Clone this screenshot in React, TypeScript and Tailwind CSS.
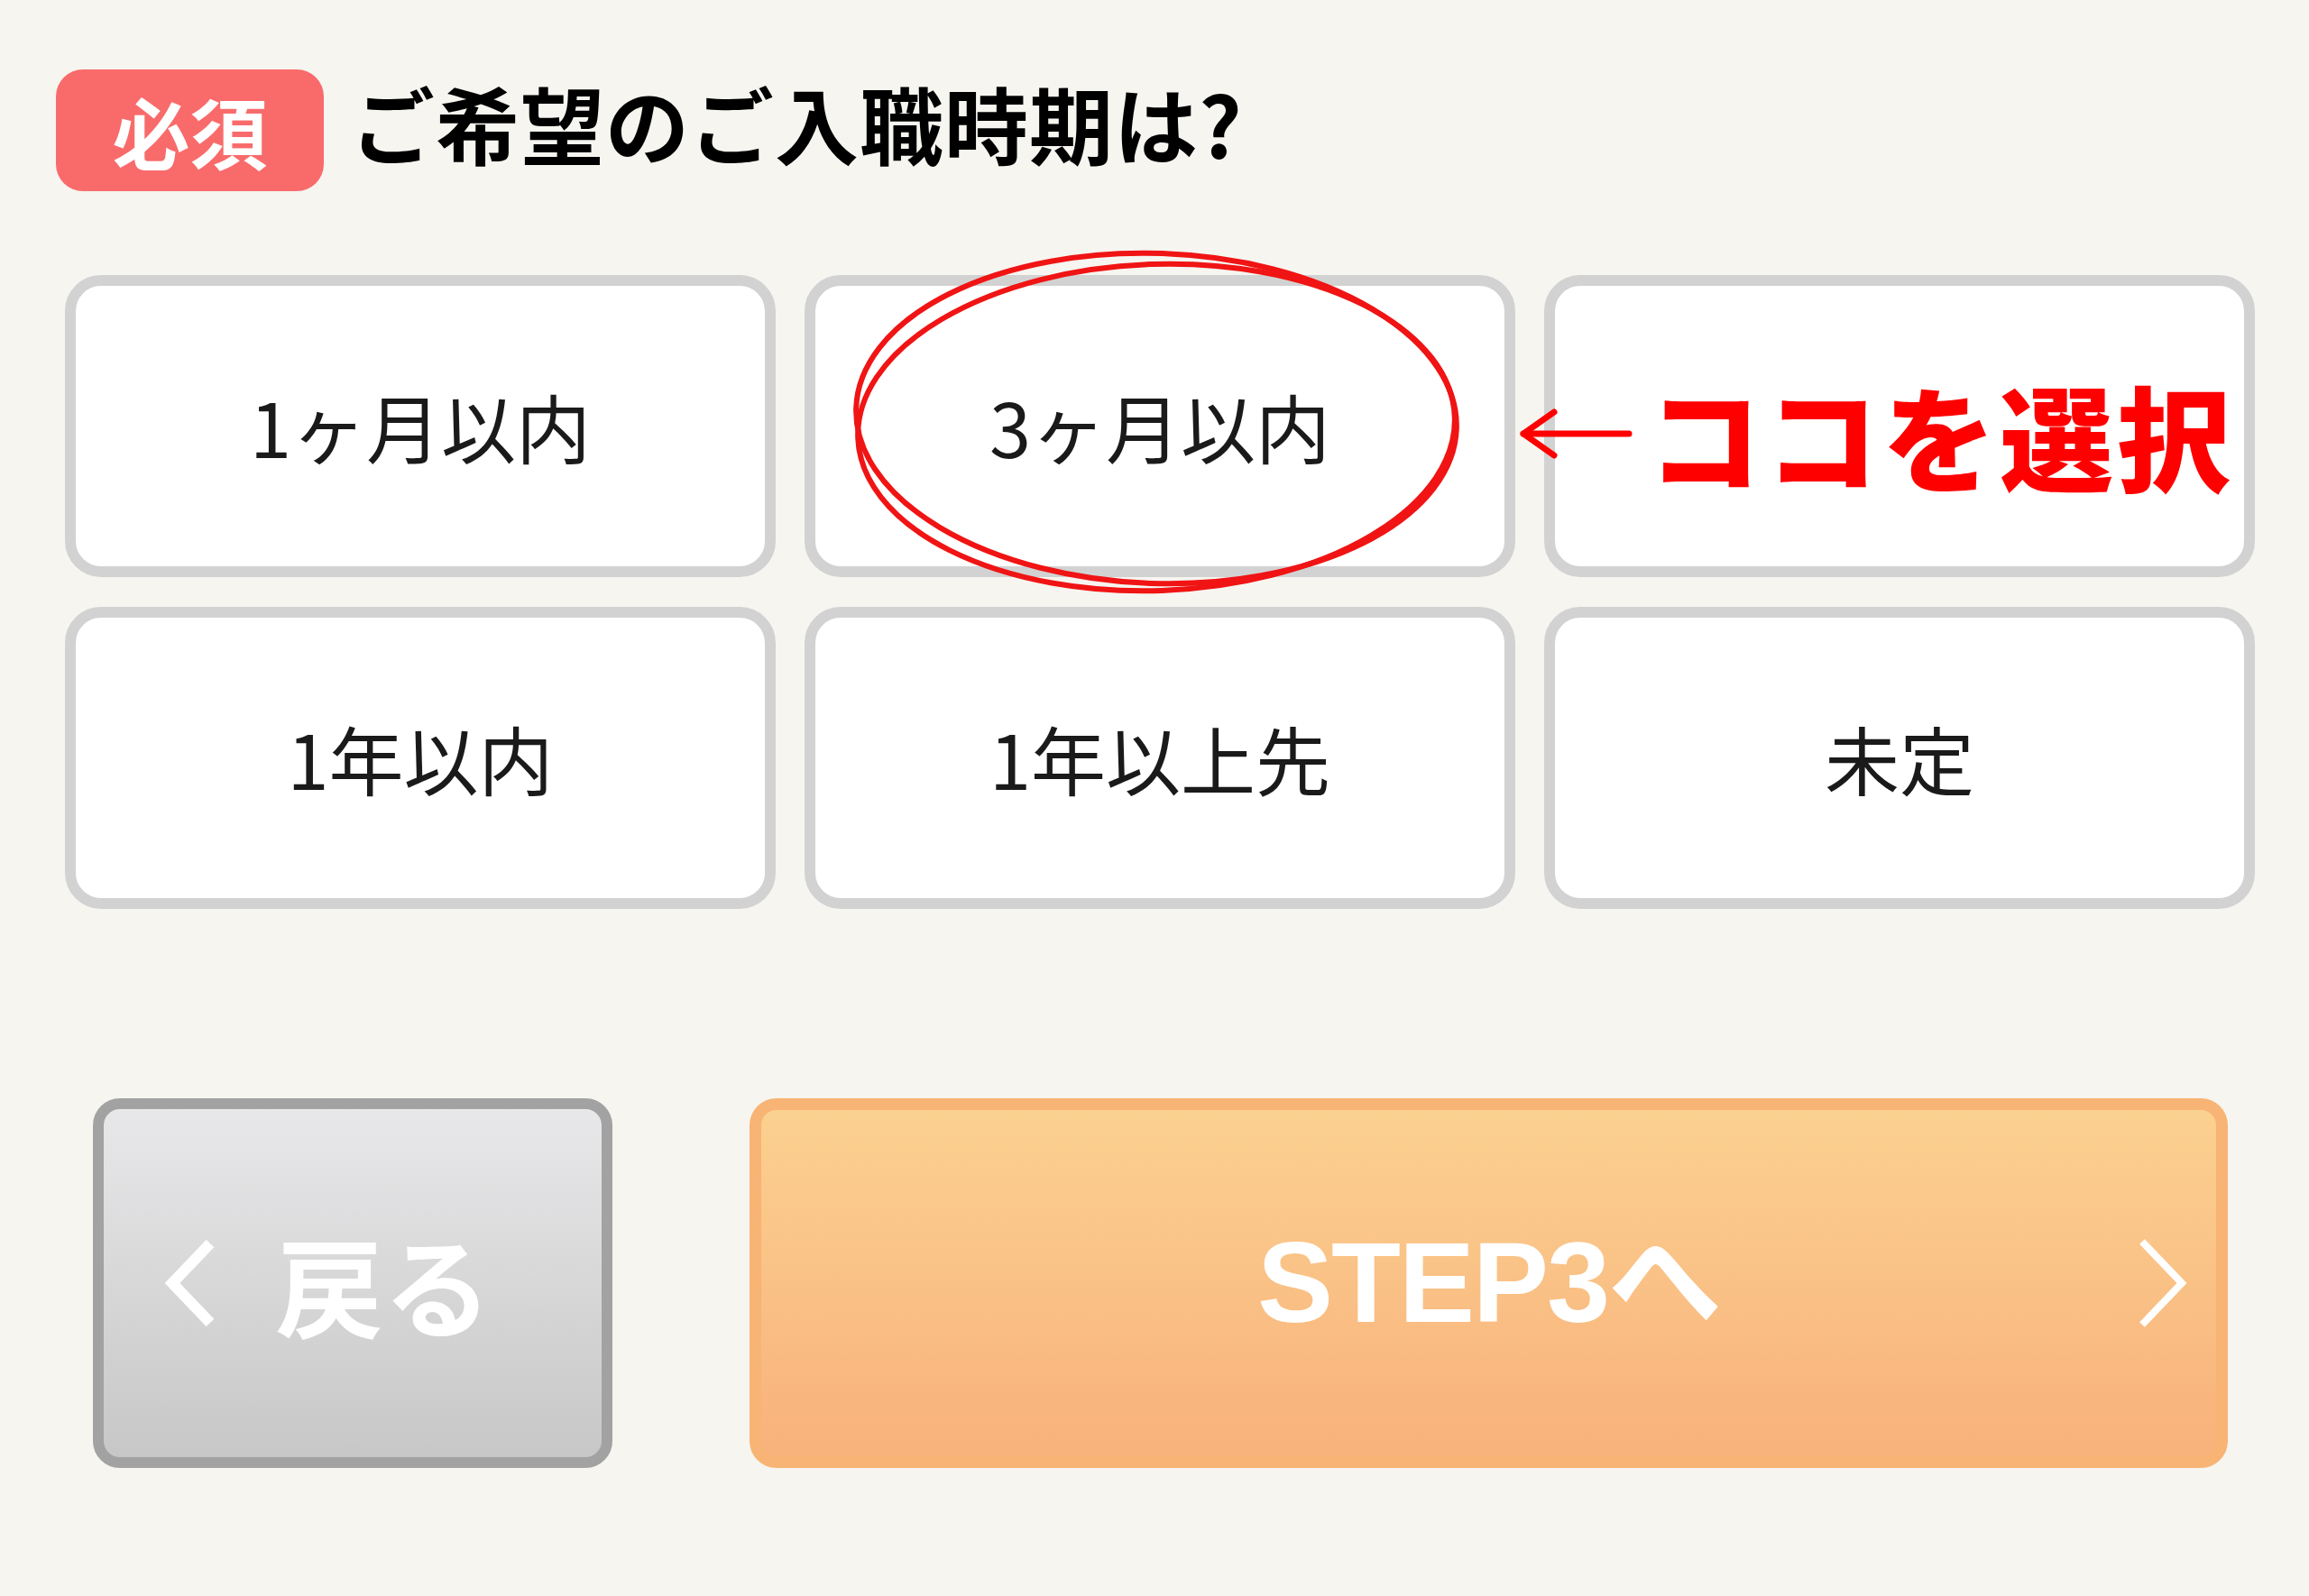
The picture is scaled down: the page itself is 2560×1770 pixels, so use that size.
import React from 'react';

const OPTIONS = ['1ヶ月以内', '3ヶ月以内', '', '1年以内', '1年以上先', '未定'];
const LABELS = ['1ヶ月以内', '3ヶ月以内', '6ヶ月以内', '1年以内', '1年以上先', '未定'];

const jp = { fontFamily: '"Noto Sans CJK JP", "Noto Sans", sans-serif' };

export default function App() {
  return (
    <div className="min-h-screen bg-[#f6f5f0] pt-[77px]" style={jp}>
      {/* Question header */}
      <div className="flex items-center pl-[62px]">
        <span className="flex h-[135px] w-[297px] items-center justify-center rounded-[30px] bg-[#f96b6b] text-[86px] font-bold leading-none text-white">
          必須
        </span>
        <h2 className="mb-[18px] ml-[30px] text-[93px] font-bold leading-none tracking-[1px] text-black">ご希望のご入職時期は?</h2>
      </div>

      {/* Options */}
      <div className="relative mt-[93px] ml-[72px] mr-[60px]">
        <div className="grid grid-cols-3 gap-x-[32px] gap-y-[33px]">
          {OPTIONS.map((label, i) => (
            <button
              key={LABELS[i]}
              className="flex h-[335px] items-center justify-center rounded-[40px] border-[12px] border-[#d2d2d2] bg-white text-[83px] font-normal leading-none text-[#1a1a1a]"
            >
              {label}
            </button>
          ))}
        </div>

        {/* Annotation: circle */}
        <svg
          className="pointer-events-none absolute left-[872px] top-[-27px] h-[380px] w-[676px] overflow-visible"
          viewBox="0 0 676 380"
          fill="none"
        >
          <ellipse cx="338" cy="186" rx="333" ry="183" stroke="#f01414" strokeWidth="6" transform="rotate(2 338 186)" />
          <ellipse cx="338" cy="196" rx="331" ry="181" stroke="#f01414" strokeWidth="6" transform="rotate(-2 338 196)" />
        </svg>

        {/* Annotation: arrow + text */}
        <div className="pointer-events-none absolute left-[1613px] top-[112px] flex h-[128px] items-center">
          <svg width="126" height="58" viewBox="0 0 126 58" fill="none" stroke="#ff0000" strokeWidth="7" strokeLinecap="round" strokeLinejoin="round">
            <path d="M4 29 H121" />
            <path d="M38 5 L4 29 L38 53" />
          </svg>
          <span className="ml-[16px] text-[126px] font-black leading-none tracking-[4px] text-[#ff0000]">ココを選択</span>
        </div>
      </div>

      {/* Navigation */}
      <div className="mt-[210px] flex gap-[152px] pl-[103px] pr-[90px]">
        <button className="flex h-[410px] w-[576px] items-center rounded-[30px] border-[12px] border-[#a2a2a2] bg-gradient-to-b from-[#e8e8ea] to-[#c7c7c7] pl-[66px] text-white">
          <svg width="58" height="96" viewBox="0 0 58 96" fill="none" stroke="white" strokeWidth="12" strokeLinecap="butt" strokeLinejoin="miter">
            <path d="M52 4 L10 48 L52 92" />
          </svg>
          <span className="ml-[66px] text-[120px] font-bold leading-none">戻る</span>
        </button>

        <button className="relative flex h-[410px] flex-1 items-center justify-center rounded-[30px] border-[13px] border-[#f8b474] bg-gradient-to-b from-[#fbd190] to-[#f8b17b] text-white">
          <span
            className="text-[126px] font-bold leading-none tracking-[-2px]"
            style={{ fontFamily: '"Liberation Sans", "Noto Sans CJK JP", sans-serif' }}
          >
            STEP3へ
          </span>
          <svg
            className="absolute right-[30px] top-1/2 -translate-y-1/2"
            width="58"
            height="100"
            viewBox="0 0 58 100"
            fill="none"
            stroke="white"
            strokeWidth="8"
          >
            <path d="M6 4 L50 50 L6 96" />
          </svg>
        </button>
      </div>
    </div>
  );
}
